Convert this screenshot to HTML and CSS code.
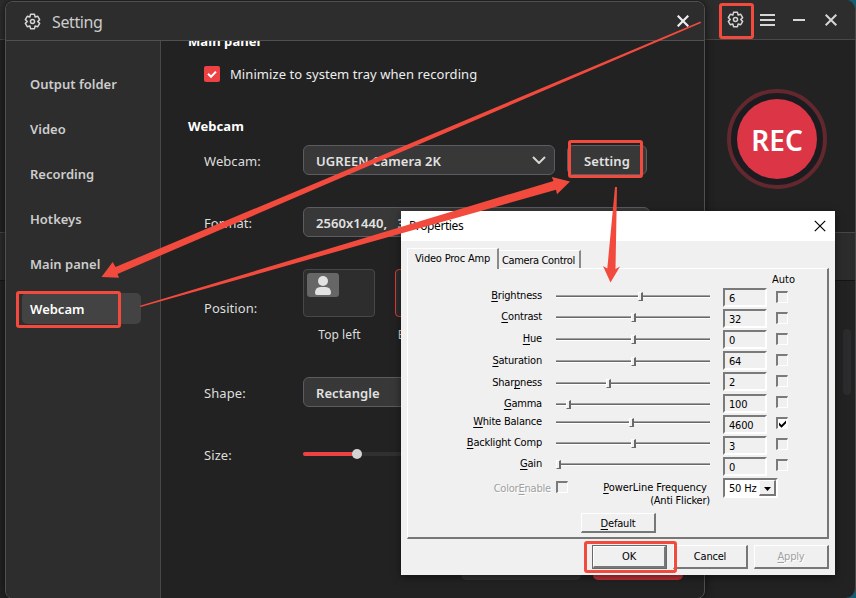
FILE: index.html
```html
<!DOCTYPE html>
<html>
<head>
<meta charset="UTF-8">
<title>Setting</title>
<link rel="stylesheet" href="styles.css">
</head>

<body>
<div class="desktop">

<!-- recorder window -->
<div class="app">
  <div class="app_bar">
    <svg class="gear" viewBox="0 0 24 24"><path d="M9.200 1.900L14.800 1.900L15.700 5.600L19.400 4.600L22.100 9.400L19.400 12L22.100 14.600L19.400 19.400L15.700 18.400L14.800 22.100L9.200 22.100L8.300 18.400L4.600 19.400L1.900 14.600L4.600 12L1.900 9.400L4.600 4.600L8.300 5.600z"/><circle cx="12" cy="12" r="2.9"/></svg>
    <svg class="menu" viewBox="0 0 15 12"><path d="M0 1h15M0 6h15M0 11h15"/></svg>
    <svg class="min" viewBox="0 0 12 12"><path d="M0 6h12"/></svg>
    <svg class="close" viewBox="0 0 12 12"><path d="M.7 .7l10.6 10.6M11.3 .7L.7 11.3"/></svg>
  </div>
  <div class="app_top"><div class="rec"><span>REC</span></div></div>
  <div class="app_band"></div>
  <div class="app_list"><i></i></div>
</div>

<!-- setting window -->
<div class="setting">
  <div class="head">
    <svg class="gear" viewBox="0 0 24 24"><path d="M9.200 1.900L14.800 1.900L15.700 5.600L19.400 4.600L22.100 9.400L19.400 12L22.100 14.600L19.400 19.400L15.700 18.400L14.800 22.100L9.200 22.100L8.300 18.400L4.600 19.400L1.900 14.600L4.600 12L1.900 9.400L4.600 4.600L8.300 5.600z"/><circle cx="12" cy="12" r="2.9"/></svg>
    <h1>Setting</h1>
    <svg class="close" viewBox="0 0 12 12"><path d="M.7 .7l10.6 10.6M11.3 .7L.7 11.3"/></svg>
  </div>
  <div class="main">
    <ul class="nav">
      <li>Output folder</li>
      <li>Video</li>
      <li>Recording</li>
      <li>Hotkeys</li>
      <li>Main panel</li>
      <li class="active">Webcam</li>
    </ul>
    <div class="content">
      <h2>Main panel</h2>
      <label class="tray"><i><svg viewBox="0 0 16 16"><path d="M4 7.8l3 3 5-5.2"/></svg></i><span>Minimize to system tray when recording</span></label>
      <h2>Webcam</h2>
      <div class="row">
        <span class="name">Webcam:</span>
        <div class="select cam"><b>UGREEN Camera 2K</b><svg viewBox="0 0 14 8"><path d="M1 1l6 6 6-6"/></svg></div>
        <div class="select set"><b>Setting</b></div>
      </div>
      <div class="row">
        <span class="name">Format:</span>
        <div class="select format"><b>2560x1440,&nbsp;&nbsp; 30fps</b></div>
      </div>
      <div class="row position">
        <span class="name">Position:</span>
        <div class="pos"><div class="card"><i><svg viewBox="0 0 32 24"><circle cx="16" cy="8" r="5"/><path d="M8 20q0-6 5.500-6h5q5.500 0 5.500 6q0 2-2 2H10q-2 0-2-2z"/></svg></i></div><p>Top left</p></div>
        <div class="pos"><div class="card on"></div><p>Bottom left</p></div>
      </div>
      <div class="row">
        <span class="name">Shape:</span>
        <div class="select format"><b>Rectangle</b></div>
      </div>
      <div class="row size">
        <span class="name">Size:</span>
        <div class="range"><i></i><em></em></div>
      </div>
      <div class="foot"><i class="cancel"></i><i class="ok"></i></div>
    </div>
  </div>
</div>

<!-- camera properties dialog -->
<div class="dialog">
  <div class="title"><span>Properties</span><svg viewBox="0 0 12 12"><path d="M.8 .8l10.400 10.400M11.200 .8L.8 11.200"/></svg></div>
  <div class="tabs"><span class="cur">Video Proc Amp</span><span>Camera Control</span></div>
  <div class="page">
    <div class="auto">Auto</div>
    <div class="cols">
      <div class="sliders">
        <div><label><u>B</u>rightness</label><p><i style="left:82px"></i></p></div>
        <div class="g3"><label><u>C</u>ontrast</label><p><i style="left:75px"></i></p></div>
        <div class="g4"><label><u>H</u>ue</label><p><i style="left:75px"></i></p></div>
        <div class="g4"><label><u>S</u>aturation</label><p><i style="left:75px"></i></p></div>
        <div class="g4"><label>Shar<u>p</u>ness</label><p><i style="left:50px"></i></p></div>
        <div class="g3"><label><u>G</u>amma</label><p><i style="left:10px"></i></p></div>
        <div><label><u>W</u>hite Balance</label><p><i style="left:73px"></i></p></div>
        <div class="g3"><label><u>B</u>acklight Comp</label><p><i style="left:75px"></i></p></div>
        <div class="g3"><label><u>G</u>ain</label><p><i style="left:0px"></i></p></div>
      </div>
      <div class="values">
        <span>6</span><span>32</span><span>0</span><span>64</span><span>2</span><span>100</span><span>4600</span><span>3</span><span>0</span>
      </div>
      <div class="checks">
        <i></i><i></i><i></i><i></i><i></i><i></i><i class="checked"><svg viewBox="0 0 9 9"><path d="M1 3.500l2.500 2.500 4.500-4.500v2.800L3.500 8.800 1 6.300z"/></svg></i><i></i><i></i>
      </div>
    </div>
    <div class="extra">
      <span class="color">Color<u>E</u>nable</span><i class="box"></i>
      <div class="power"><p><u>P</u>owerLine Frequency&nbsp;</p><p>(Anti Flicker)</p></div>
      <div class="combo"><span>50 Hz</span><b><svg viewBox="0 0 7 4"><path d="M0 0h7L3.500 4z"/></svg></b></div>
    </div>
    <div class="btn default"><u>D</u>efault</div>
  </div>
  <div class="btns">
    <div class="btn okbtn"><span>OK</span></div>
    <div class="btn">Cancel</div>
    <div class="btn off"><u>A</u>pply</div>
  </div>
</div>

<!-- marks and arrows over the windows -->
<svg class="marks" viewBox="0 0 856 598">
  <rect x="720.500" y="4.500" width="32" height="33" rx="1.500"/>
  <rect x="569.500" y="141.500" width="72" height="35" rx="1.500"/>
  <rect x="17.500" y="292.500" width="102" height="34" rx="1.500"/>
  <rect x="585.500" y="542.500" width="90" height="29" rx="1.500"/>
  <path d="M700.500 21.500L701 23L117.500 274L119 277.800L101.500 277L112.700 262L115.500 267z"/>
  <path d="M140 305.700L553.500 181L551.800 177L570 181.500L557 194.200L556 189.700L140.500 307z"/>
  <path d="M615 187h2L615.500 269L620 266.500L610.500 282.500L603 266L607.300 268.500z"/>
</svg>
</div>
</body>
</html>
```
FILE: styles.css
```css
*{ padding:0; margin:0; box-sizing:border-box;}
ul,li{ list-style:none;}
i,em{ font-style:normal;}
svg{ display:block; fill:none; stroke:#d6d6d6;}
body{ font:14px/20px "Noto Sans","Open Sans",sans-serif; color:#ddd; background:#1b1b1b; overflow:hidden;}
.desktop{ position:relative; width:856px; height:598px; overflow:hidden; background:#0e6076;}

/*recorder window*/
.app{ position:absolute; left:-20px; top:0; width:876px; height:598px; background:#222; border-right:1px solid #4a4a4a; border-radius:0 10px 10px 0; overflow:hidden;}
.app_bar{ height:40px; display:flex; align-items:center; justify-content:flex-end; padding-right:18px; background:#2d2d2d; border-bottom:1px solid #484848;}
.app_bar svg{ stroke-width:2;}
.gear{ width:17px; height:17px; stroke-linejoin:round;}
.app_bar .gear,.head .gear{ stroke-width:2.1;}
.menu{ width:15px; height:12px; margin-left:16px;}
.min{ width:12px; height:12px; margin-left:18px;}
.close{ width:12px; height:12px;}
.app_bar .close{ margin-left:20px;}
.app_top{ height:192px; display:flex; justify-content:flex-end; padding:49px 28px 0 0;}
.rec{ width:100px; height:100px; border:4px solid #63272e; border-radius:50%; background:#1c1c20; padding:6px;}
.rec span{ display:block; height:80px; border-radius:50%; background:#dc3545; color:#fff; font:600 28px/82px "Noto Sans","Open Sans",sans-serif; text-align:center;}
.app_band{ height:49px; background:#2c2c2c; border-top:1px solid #484848; border-bottom:1px solid #141414;}
.app_list{ display:flex; justify-content:flex-end; padding:48px 4px 0 0;}
.app_list i{ width:8px; height:66px; border-radius:4px; background:#2b2b2d;}

/*setting window*/
.setting{ position:absolute; left:5px; top:1px; width:700px; height:598px; display:flex; flex-direction:column; background:#222; border:1px solid #505050; border-radius:8px; overflow:hidden; box-shadow:0 0 8px #111;}
.head{ flex:none; height:39px; display:flex; align-items:center; padding:0 15px 0 18px; background:#2d2d2d; border-bottom:1px solid #505050;}
.head h1{ flex:1; margin-left:11px; padding-top:2px; font-size:16px; font-weight:400; color:#ccc; letter-spacing:-.4px;}
.head .close{ stroke:#eee; stroke-width:2.2;}
.main{ flex:1; display:flex; min-height:0;}
.nav{ width:155px; padding:27px 19px 0 16px; background:#2d2d2d; border-right:1px solid #484848;}
.nav li{ height:31px; margin-bottom:14px; padding-left:8px; line-height:33px; font-size:13px; font-weight:600; color:#ccc; border-radius:5px;}
.nav .active{ background:#434343; color:#fff;}
.content{ flex:1; padding-left:27px; overflow:hidden; font-size:13px; letter-spacing:.07px;}
.content h2{ margin-top:-10px; font-size:13px; font-weight:700; color:#fff;}
.tray{ display:flex; align-items:center; height:20px; margin:13px 0 32px 16px; color:#eee;}
.tray i{ width:16px; height:16px; margin-right:10px; border-radius:2px; background:#ee4144;}
.tray + h2{ margin-top:0; margin-bottom:9px;}
.tray svg{ stroke:#fff; stroke-width:2;}
.row{ display:flex; align-items:center; height:30px; margin:0 0 32px 16px;}
.name{ width:99px; padding-top:2px; color:#ddd;}
.select{ height:30px; display:flex; align-items:center; justify-content:space-between; padding:0 8px 0 12px; border:1px solid #5c5b62; border-radius:6px; background:#383838; color:#e2e2e2;}
.select b{ padding-top:2px; font-weight:600;}
.select svg{ width:14px; height:8px; stroke-width:2;}
.cam{ width:252px;}
.set{ width:80px; margin-left:12px; justify-content:center; padding:0;}
.format{ width:347px;}
.position{ height:78px; margin-bottom:30px;}
.position .name{ padding-top:0;}
.pos{ width:92px; align-self:flex-start;}
.pos p{ width:73px; margin-top:8px; text-align:center; white-space:nowrap; font-size:12px;}
.pos .on + p{ width:70px;}
.card{ width:72px; height:48px; padding:3px; border:1px solid #484848; border-radius:4px; background:#2d2d2d;}
.card i{ display:block; width:32px; height:24px; border-radius:3px; background:#666;}
.card svg{ fill:#e2e2e2; stroke:none;}
.on{ border-color:#dc3b3b;}
.range{ position:relative; width:200px; height:4px; border-radius:2px; background:#303030;}
.range i{ display:block; width:54px; height:4px; border-radius:2px; background:#ee4144;}
.range em{ position:absolute; left:49px; top:-3px; width:10px; height:10px; border-radius:50%; background:#d4d4d4;}
.foot{ display:flex; margin:81px 0 0 273px;}
.foot i{ height:30px; border-radius:5px;}
.cancel{ width:120px; margin-right:12px; background:#333;}
.ok{ width:90px; background:#c23236;}

/*properties dialog*/
.dialog{ position:absolute; left:401px; top:211px; width:434px; height:364px; background:#f0f0f0; color:#000; font:11px/13px "DejaVu Sans Condensed","DejaVu Sans",sans-serif; font-stretch:condensed; letter-spacing:-.2px; box-shadow:0 2px 8px rgba(0,0,0,.5);}
.dialog u{ text-underline-offset:2px;}
.title{ height:30px; display:flex; align-items:center; justify-content:space-between; padding:0 9px 0 8px; background:#fff; font:12px/20px "Noto Sans","Open Sans",sans-serif; letter-spacing:-.4px;}
.title svg{ width:12px; height:12px; stroke:#000; stroke-width:1.2;}
.tabs{ height:27px; display:flex; align-items:flex-end; padding-left:6px;}
.tabs span{ height:18px; padding:3px 0 0 3px; border-right:2px solid #8a8a8a; border-top:1px solid #fff; white-space:nowrap; width:82px; letter-spacing:-.35px;}
.tabs .cur{ position:relative; width:92px; height:21px; margin-bottom:-1px; padding:3px 0 0 7px; background:#f0f0f0; border-left:1px solid #fff; letter-spacing:-.2px;}
.page{ width:422px; height:271px; margin-left:6px; border:solid; border-width:1px 2px 2px 1px; border-color:#fff #777 #777 #fff;}
.auto{ padding:4px 0 0 364px; letter-spacing:0;}
.cols{ display:flex;}
.sliders{ width:302px; padding-top:1px;}
.sliders div{ display:flex; align-items:center; height:18px;}
.sliders .g3{ margin-top:3px;}
.sliders .g4{ margin-top:4px;}
.sliders label{ width:134px; margin-right:14px; padding-bottom:1px; text-align:right;}
.sliders p{ position:relative; width:154px; height:3px; border:solid; border-width:1px 0; border-color:#a0a0a0 #fff #fff; background:#696969;}
.sliders i{ position:absolute; top:-4px; width:5px; height:9px; background:#f0f0f0; border:solid; border-width:1px 2px 1px 1px; border-color:#fff #696969 #696969 #fff;}
.values{ width:44px; margin:2px 0 0 13px;}
.values span{ display:block; height:19px; margin-bottom:2.120px; padding:2px 0 0 4px; border:2px solid; border-color:#7a7a7a #fff #fff #7a7a7a; line-height:13px;}
.checks{ padding:5px 0 0 9px;}
.checks i,.box{ display:block; width:12px; height:12px; margin-bottom:9px; border:solid; border-width:2px 1px 1px 2px; border-color:#7a7a7a #fff #fff #7a7a7a;}
.checked{ background:#fff;}
.checked svg{ width:9px; height:9px; fill:#000; stroke:none;}
.extra{ display:flex; height:35px; margin-top:-2px;}
.color{ width:143px; padding-top:4px; text-align:right; color:#a0a0a0; text-shadow:1px 1px #fff;}
.box{ margin:3px 0 0 5px;}
.power{ width:142px; padding-top:3px; text-align:right;}
.power p:first-child{ letter-spacing:-.05px;}
.combo{ display:flex; width:55px; height:20px; margin-left:13px; border:2px solid; border-color:#7a7a7a #fff #fff #7a7a7a; background:#fff;}
.combo span{ flex:1; padding:2px 0 0 4px;}
.combo b{ width:17px; padding:6px 0 0 4px; background:#f0f0f0; border:solid; border-width:1px 2px 2px 1px; border-color:#fff #777 #777 #fff;}
.combo svg{ width:7px; height:4px; fill:#000; stroke:none;}
.btn{ width:75px; height:24px; line-height:21px; text-align:center; border:solid; border-width:1px 2px 2px 1px; border-color:#fff #777 #777 #fff;}
.default{ width:75px; height:20px; margin:0 0 0 173px; line-height:19px;}
.btns{ display:flex; gap:6px; padding:6px 0 0 191px;}
.okbtn{ border:1px solid #696969;}
.okbtn span{ display:block; height:22px; line-height:19px; border:solid; border-width:1px 2px 2px 1px; border-color:#fff #777 #777 #fff;}
.off{ color:#a0a0a0; text-shadow:1px 1px #fff;}

/*marks*/
.marks{ position:absolute; left:0; top:0; width:856px; height:598px;}
.marks rect{ stroke:#f24b3e; stroke-width:3;}
.marks path{ fill:#f24b3e; stroke:none;}
```
